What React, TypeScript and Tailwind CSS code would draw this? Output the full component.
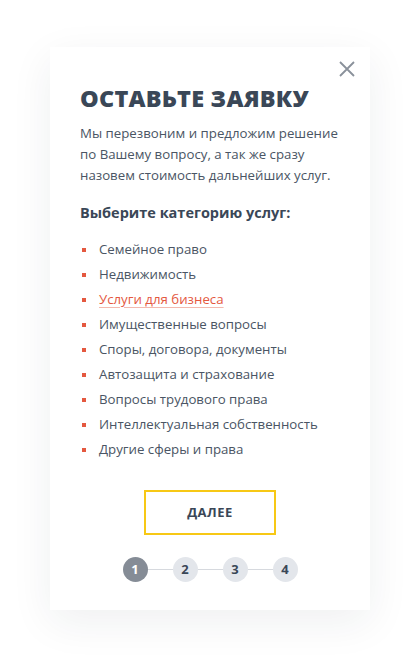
import { useState } from "react";

const categories = [
  "Семейное право",
  "Недвижимость",
  "Услуги для бизнеса",
  "Имущественные вопросы",
  "Споры, договора, документы",
  "Автозащита и страхование",
  "Вопросы трудового права",
  "Интеллектуальная собственность",
  "Другие сферы и права",
];

export default function App() {
  const [active, setActive] = useState<number>(2);
  const [step] = useState<number>(1);

  return (
    <div
      className="flex min-h-[665px] w-full justify-center bg-white pt-[47px]"
      style={{ fontFamily: '"Open Sans", "Noto Sans", sans-serif' }}
    >
      <div className="relative h-[563px] w-[320px] bg-white px-[30px] pt-[36px] shadow-[0_12px_40px_rgba(30,40,60,0.07)]">
        <button className="absolute right-[14px] top-[13px] flex h-[18px] w-[18px] items-center justify-center text-[#8a919b]">
          <svg width="16" height="16" viewBox="0 0 16 16" fill="none">
            <path d="M1 1L15 15M15 1L1 15" stroke="currentColor" strokeWidth="1.8" />
          </svg>
        </button>

        <h2 className="text-[23.5px] font-extrabold uppercase leading-[30px] tracking-[0.2px] text-[#3a4757]">
          Оставьте заявку
        </h2>
        <p className="mt-[10px] text-[13.25px] leading-[21px] text-[#4a5564]">
          Мы перезвоним и предложим решение по Вашему вопросу, а так же сразу назовем стоимость дальнейших услуг.
        </p>

        <h3 className="mt-[17px] text-[14.5px] font-bold leading-[20px] text-[#3a4757]">
          Выберите категорию услуг:
        </h3>

        <ul className="mt-[14px] flex flex-col">
          {categories.map((name, i) => (
            <li
              key={name}
              onClick={() => setActive(i)}
              className="flex h-[25px] cursor-pointer items-center"
            >
              <span className="ml-[2px] mr-[13px] h-[4px] w-[4px] bg-[#e4583f]" />
              <span
                className={
                  i === active
                    ? "text-[13.25px] text-[#e4583f] underline decoration-[#f3b9ae] underline-offset-[3px]"
                    : "text-[13.25px] text-[#4a5564]"
                }
              >
                {name}
              </span>
            </li>
          ))}
        </ul>

        <div className="mt-[28px] flex justify-center">
          <button className="flex h-[45px] w-[132px] items-center justify-center border-2 border-[#f7c815] text-[13px] font-bold tracking-[0.5px] text-[#3a4757]">
            ДАЛЕЕ
          </button>
        </div>

        <div className="mt-[22px] flex items-center justify-center">
          {[1, 2, 3, 4].map((n) => (
            <div key={n} className="flex items-center">
              {n > 1 && <div className="h-px w-[25px] bg-[#d6d9de]" />}
              <div
                className={
                  n === step
                    ? "flex h-[25px] w-[25px] items-center justify-center rounded-full bg-[#858c96] text-[13px] font-bold text-white"
                    : "flex h-[25px] w-[25px] items-center justify-center rounded-full bg-[#e3e6eb] text-[13px] font-bold text-[#3a4757]"
                }
              >
                {n}
              </div>
            </div>
          ))}
        </div>
      </div>
    </div>
  );
}
